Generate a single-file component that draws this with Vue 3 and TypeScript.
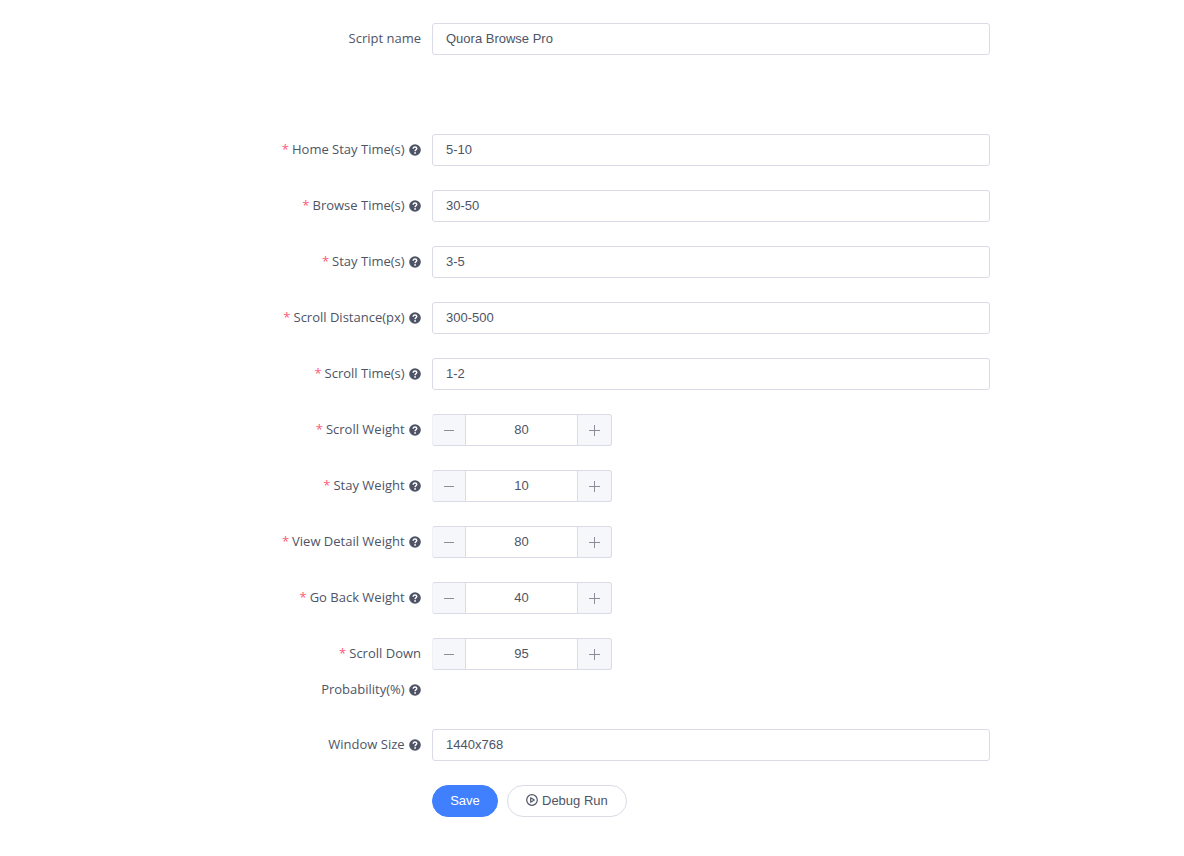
<script setup lang="ts">
import { reactive } from 'vue'

interface Field {
  id: string
  label: string
  kind: 'text' | 'number'
  value: string | number
  required?: boolean
  help?: boolean
  spaced?: boolean
}

const fields = reactive<Field[]>([
  { id: 'script-name', label: 'Script name', kind: 'text', value: 'Quora Browse Pro', spaced: true },
  { id: 'home-stay', label: 'Home Stay Time(s)', kind: 'text', value: '5-10', required: true, help: true },
  { id: 'browse-time', label: 'Browse Time(s)', kind: 'text', value: '30-50', required: true, help: true },
  { id: 'stay-time', label: 'Stay Time(s)', kind: 'text', value: '3-5', required: true, help: true },
  { id: 'scroll-distance', label: 'Scroll Distance(px)', kind: 'text', value: '300-500', required: true, help: true },
  { id: 'scroll-time', label: 'Scroll Time(s)', kind: 'text', value: '1-2', required: true, help: true },
  { id: 'scroll-weight', label: 'Scroll Weight', kind: 'number', value: 80, required: true, help: true },
  { id: 'stay-weight', label: 'Stay Weight', kind: 'number', value: 10, required: true, help: true },
  { id: 'detail-weight', label: 'View Detail Weight', kind: 'number', value: 80, required: true, help: true },
  { id: 'back-weight', label: 'Go Back Weight', kind: 'number', value: 40, required: true, help: true },
  { id: 'scroll-down', label: 'Scroll Down Probability(%)', kind: 'number', value: 95, required: true, help: true },
  { id: 'window-size', label: 'Window Size', kind: 'text', value: '1440x768', help: true },
])

function step(field: Field, delta: number): void {
  field.value = Math.max(0, Number(field.value) + delta)
}
</script>

<template>
  <form class="form" @submit.prevent>
    <div v-for="field in fields" :key="field.id" class="row" :class="{ spaced: field.spaced }">
      <label class="label" :class="{ required: field.required }" :for="field.id">{{ field.label }}
        <svg v-if="field.help" class="help" viewBox="0 0 12 12" aria-hidden="true">
          <circle cx="6" cy="6" r="5.8" fill="#4e5466" />
          <path d="M4.2 4.8C4.2 3.6 5 3 6 3s1.8.6 1.8 1.6C7.8 5.7 6.1 5.7 6.1 7.2" fill="none" stroke="#fff" stroke-width="1.4" />
          <circle cx="6.1" cy="8.9" r=".9" fill="#fff" />
        </svg>
      </label>
      <input v-if="field.kind === 'text'" :id="field.id" v-model="field.value" class="input" type="text" />
      <div v-else class="stepper">
        <button class="step minus" type="button" :aria-label="`Decrease ${field.label}`" @click="step(field, -1)">
          <svg viewBox="0 0 12 12"><path d="M1 6.5h10" /></svg>
        </button>
        <input :id="field.id" v-model="field.value" class="count" type="text" inputmode="numeric" />
        <button class="step plus" type="button" :aria-label="`Increase ${field.label}`" @click="step(field, 1)">
          <svg viewBox="0 0 12 12"><path d="M0 6.5h11M5.5 1v11" /></svg>
        </button>
      </div>
    </div>
    <div class="actions">
      <button class="btn primary" type="submit">Save</button>
      <button class="btn" type="button">
        <svg viewBox="0 0 12 12" aria-hidden="true">
          <circle cx="6" cy="6" r="5.3" fill="none" stroke="#4e5466" stroke-width="1.2" />
          <path d="M4.7 3.8v4.4L8.3 6z" fill="none" stroke="#4e5466" stroke-width="1.2" stroke-linejoin="round" />
        </svg>
        Debug Run
      </button>
    </div>
  </form>
</template>

<style>
body {
  margin: 0;
  background: #fff;
}
</style>

<style scoped>
.form {
  display: flex;
  flex-direction: column;
  gap: 24px;
  padding: 23px 194px 39px;
  color: #4e5466;
  font-family: "Liberation Sans", Arial, sans-serif;
  font-size: 13px;
}
.row {
  display: grid;
  grid-template-columns: 227px minmax(0, 1fr);
  column-gap: 11px;
  align-items: start;
}
.row.spaced {
  margin-bottom: 55px;
}
.label {
  margin: -3px 0 -2px;
  padding-left: 77px;
  font-family: "Open Sans", "Noto Sans", sans-serif;
  font-size: 13px;
  line-height: 36px;
  text-align: right;
}
.required::before {
  content: "*";
  margin-right: 3px;
  color: #ff5a78;
}
.help {
  width: 12px;
  height: 12px;
  margin-left: 1px;
  vertical-align: -2px;
}
.input,
.count {
  box-sizing: border-box;
  width: 100%;
  height: 32px;
  margin: 0;
  padding: 0 13px 2px;
  border: 1px solid #dadbe6;
  border-radius: 3px;
  outline: none;
  background: #fff;
  color: #4e5466;
  font: inherit;
}
.input:focus,
.count:focus {
  border-color: #4080ff;
}
.stepper {
  display: grid;
  grid-template-columns: 33px 113px 34px;
  width: 180px;
}
.count {
  padding: 0 0 2px;
  border-radius: 0;
  text-align: center;
}
.step {
  display: flex;
  align-items: center;
  justify-content: center;
  height: 32px;
  padding: 0;
  border: 1px solid #dadbe6;
  background: #f5f7fb;
  cursor: pointer;
}
.minus {
  border-right: 0;
  border-left-color: #eef0f6;
  border-radius: 3px 0 0 3px;
}
.plus {
  border-left: 0;
  border-radius: 0 3px 3px 0;
}
.step svg {
  width: 12px;
  height: 12px;
  fill: none;
  stroke: #8b8e98;
  stroke-width: 1;
}
.actions {
  display: flex;
  gap: 9px;
  padding-left: 238px;
}
.btn {
  display: flex;
  align-items: center;
  justify-content: center;
  gap: 4px;
  height: 32px;
  padding: 0 18px 2px;
  border: 1px solid #dadbe6;
  border-radius: 16px;
  background: #fff;
  color: #4e5466;
  font: inherit;
  cursor: pointer;
}
.btn svg {
  width: 12px;
  height: 12px;
}
.primary {
  width: 66px;
  border-color: #4080ff;
  background: #4080ff;
  color: #fff;
}
</style>
